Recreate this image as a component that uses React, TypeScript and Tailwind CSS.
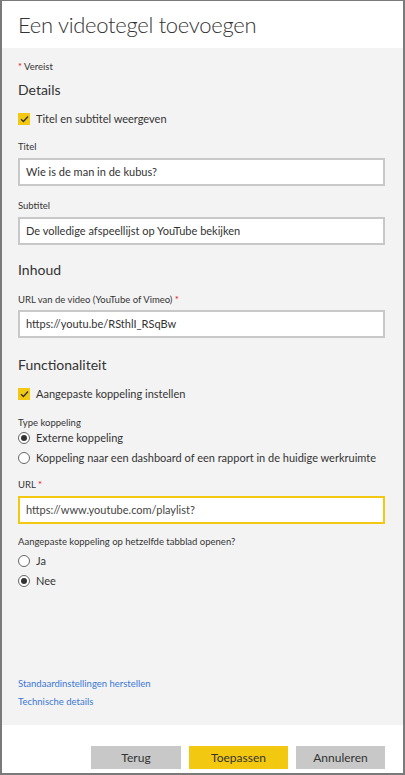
import React from "react";

const font = { fontFamily: 'Lato, "Open Sans", sans-serif' };

function Check({ label }: { label: string }) {
  return (
    <div className="flex items-center gap-[6px] h-[14px]">
      <span className="w-[12px] h-[12px] bg-[#f2c811] flex items-center justify-center">
        <svg width="9" height="8" viewBox="0 0 9 8">
          <path d="M1 4.2 L3.4 6.4 L8 1.6" fill="none" stroke="#333" strokeWidth="1.4" />
        </svg>
      </span>
      <span className="text-[11px] leading-[14px] text-[#333] whitespace-nowrap">{label}</span>
    </div>
  );
}

function Radio({ label, on }: { label: string; on?: boolean }) {
  return (
    <div className="flex items-center gap-[6px] h-[20px]">
      <span className="w-[12px] h-[12px] rounded-full border border-[#666] bg-white flex items-center justify-center shrink-0">
        {on && <span className="w-[6px] h-[6px] rounded-full bg-[#333]" />}
      </span>
      <span className="text-[11px] text-[#333] whitespace-nowrap">{label}</span>
    </div>
  );
}

function Field({ value, yellow }: { value: string; yellow?: boolean }) {
  return (
    <div
      className={
        "h-[28px] bg-white border-2 flex items-center px-[6px] text-[11px] " +
        (yellow ? "border-[#f2c811] text-[#444]" : "border-[#c8c8c8] text-[#333]")
      }
    >
      {value}
    </div>
  );
}

export default function App() {
  return (
    <div
      style={font}
      className="w-[405px] h-[775px] border-x-2 border-t border-b-2 border-[#7a7a7a] flex flex-col bg-white"
    >
      <div className="h-[47px] flex items-center px-[16px]">
        <h1 className="text-[22px] font-light text-[#333] leading-none tracking-[-0.3px]">
          Een videotegel toevoegen
        </h1>
      </div>
      <div className="h-[677px] bg-[#f3f3f3] pl-[16px] pr-[18px] flex flex-col">
        <div className="mt-[12px] text-[9.5px] text-[#333] flex items-center h-[14px]">
          <span className="text-[#e81123] mr-[2px]">*</span>Vereist
        </div>
        <div className="mt-[6px] text-[14px] text-[#333] h-[20px] leading-[20px]">Details</div>
        <div className="mt-[12px]">
          <Check label="Titel en subtitel weergeven" />
        </div>
        <div className="mt-[14px] text-[9.5px] text-[#333] h-[14px] leading-[14px]">Titel</div>
        <div className="mt-[4px]">
          <Field value="Wie is de man in de kubus?" />
        </div>
        <div className="mt-[13px] text-[9.5px] text-[#333] h-[14px] leading-[14px]">Subtitel</div>
        <div className="mt-[4px]">
          <Field value="De volledige afspeellijst op YouTube bekijken" />
        </div>
        <div className="mt-[15px] text-[14px] text-[#333] h-[20px] leading-[20px]">Inhoud</div>
        <div className="mt-[13px] text-[9.5px] text-[#333] h-[14px] leading-[14px]">
          URL van de video (YouTube of Vimeo) <span className="text-[#e81123]">*</span>
        </div>
        <div className="mt-[3px]">
          <Field value="https://youtu.be/RSthlI_RSqBw" />
        </div>
        <div className="mt-[17px] text-[14px] text-[#333] h-[20px] leading-[20px]">Functionaliteit</div>
        <div className="mt-[12px]">
          <Check label="Aangepaste koppeling instellen" />
        </div>
        <div className="mt-[15px] text-[9.5px] text-[#333] h-[14px] leading-[14px]">Type koppeling</div>
        <div className="-mt-[2px] flex flex-col">
          <Radio label="Externe koppeling" on />
          <Radio label="Koppeling naar een dashboard of een rapport in de huidige werkruimte" />
        </div>
        <div className="mt-[10px] text-[9.5px] text-[#333] h-[14px] leading-[14px]">
          URL <span className="text-[#e81123]">*</span>
        </div>
        <div className="mt-[4px]">
          <Field value="https://www.youtube.com/playlist?" yellow />
        </div>
        <div className="mt-[11px] text-[9.5px] text-[#333] h-[14px] leading-[14px]">
          Aangepaste koppeling op hetzelfde tabblad openen?
        </div>
        <div className="mt-[2px] flex flex-col">
          <Radio label="Ja" />
          <Radio label="Nee" on />
        </div>
        <div className="mt-auto mb-[16px] flex flex-col gap-[4px] text-[9.5px] text-[#3a78d8]">
          <span className="h-[14px] leading-[14px]">Standaardinstellingen herstellen</span>
          <span className="h-[14px] leading-[14px]">Technische details</span>
        </div>
      </div>
      <div className="flex-1 flex items-end justify-end gap-[8px] pr-[18px] pb-[4px]">
        <button className="w-[90px] h-[23px] bg-[#c8c8c8] text-[12px] text-[#333]">Terug</button>
        <button className="w-[99px] h-[23px] bg-[#f2c811] text-[12px] text-[#333]">Toepassen</button>
        <button className="w-[89px] h-[23px] bg-[#c8c8c8] text-[12px] text-[#333]">Annuleren</button>
      </div>
    </div>
  );
}
